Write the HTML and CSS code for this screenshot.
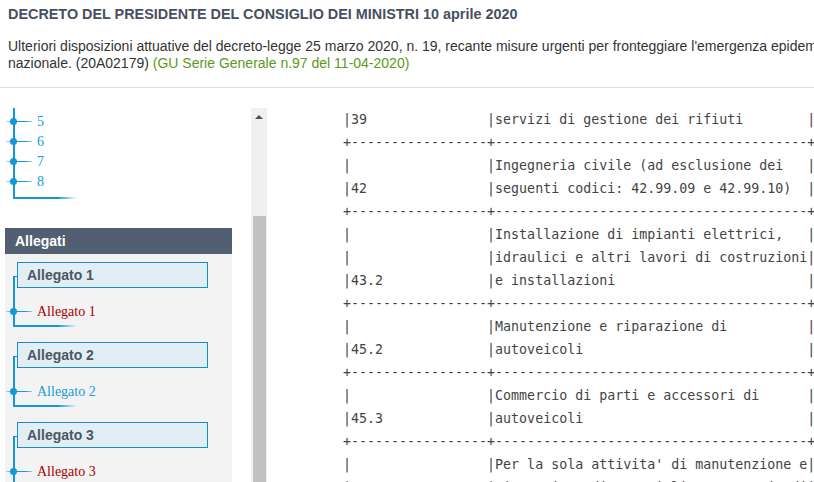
FILE: index.html
```html
<!DOCTYPE html>
<html lang="it">
<head>
  <meta charset="UTF-8" />
  <title>DPCM 10 aprile 2020</title>
  <link rel="stylesheet" href="styles.css">
</head>
<body>
  <header class="atto-header">
    <h1 class="atto-title">DECRETO DEL PRESIDENTE DEL CONSIGLIO DEI MINISTRI 10 aprile 2020</h1>
    <p class="atto-desc">Ulteriori disposizioni attuative del decreto-legge 25 marzo 2020, n. 19, recante misure urgenti per fronteggiare l'emergenza epidemiologica da COVID-19, applicabili sull'intero territorio<br>nazionale. (20A02179) <span class="gu-ref">(GU Serie Generale n.97 del 11-04-2020)</span></p>
  </header>

  <div class="layout">
    <aside class="sidebar">
      <div class="sidebar-inner">
        <ul class="tree">
          <li class="tree-item blue">5</li>
          <li class="tree-item blue">6</li>
          <li class="tree-item blue">7</li>
          <li class="tree-item blue">8</li>
        </ul>

        <div class="panel">
          <div class="panel-head">Allegati</div>

          <div class="allegato">
            <div class="allegato-title">Allegato 1</div>
            <ul class="tree sub">
              <li class="tree-item red">Allegato 1</li>
            </ul>
          </div>

          <div class="allegato">
            <div class="allegato-title">Allegato 2</div>
            <ul class="tree sub">
              <li class="tree-item blue">Allegato 2</li>
            </ul>
          </div>

          <div class="allegato">
            <div class="allegato-title">Allegato 3</div>
            <ul class="tree sub">
              <li class="tree-item red">Allegato 3</li>
            </ul>
          </div>
        </div>
      </div>

      <div class="scrollbar">
        <div class="scroll-arrow"></div>
        <div class="scroll-thumb"></div>
      </div>
    </aside>

    <main class="content">
<pre class="atto-text">|39               |servizi di gestione dei rifiuti        |
+-----------------+---------------------------------------+
|                 |Ingegneria civile (ad esclusione dei   |
|42               |seguenti codici: 42.99.09 e 42.99.10)  |
+-----------------+---------------------------------------+
|                 |Installazione di impianti elettrici,   |
|                 |idraulici e altri lavori di costruzioni|
|43.2             |e installazioni                        |
+-----------------+---------------------------------------+
|                 |Manutenzione e riparazione di          |
|45.2             |autoveicoli                            |
+-----------------+---------------------------------------+
|                 |Commercio di parti e accessori di      |
|45.3             |autoveicoli                            |
+-----------------+---------------------------------------+
|                 |Per la sola attivita' di manutenzione e|
|                 |riparazione di motocicli e commercio di|</pre>
    </main>
  </div>
</body>
</html>
```

FILE: styles.css
```css
html, body {
  margin: 0;
  padding: 0;
  height: 100%;
  overflow: hidden;
  background-color: #fff;
}

body {
  font-family: "Liberation Sans", Arial, sans-serif;
  color: #333;
  width: 1200px;
}

/* intestazione atto */
.atto-header {
  padding: 5px 8px 0;
  border-bottom: 1px solid #ddd;
  height: 82px;
}

.atto-title {
  margin: 0;
  font-size: 14.4px;
  line-height: 18px;
  font-weight: bold;
  color: #474f60;
}

.atto-desc {
  margin: 15px 0 0;
  font-size: 14px;
  line-height: 17px;
  color: #333;
}

.gu-ref {
  color: #5b9a22;
}

/* layout */
.layout {
  display: flex;
  margin-top: 20px;
  height: 400px;
}

.sidebar {
  display: flex;
  width: 267px;
  flex-shrink: 0;
}

.sidebar-inner {
  width: 251px;
  overflow: hidden;
}

/* albero */
.tree {
  list-style: none;
  margin: 0 0 0 13px;
  padding: 4px 0 6px;
  border-left: 2px solid #1596d6;
  position: relative;
}

.tree::after {
  content: "";
  position: absolute;
  left: -2px;
  bottom: -1px;
  width: 64px;
  height: 2px;
  background: linear-gradient(to right, #1596d6 70%, rgba(21, 150, 214, 0));
}

.tree-item {
  position: relative;
  height: 20px;
  line-height: 20px;
  padding-left: 22px;
  font-family: "Liberation Serif", "Times New Roman", serif;
  font-size: 14px;
}

.tree-item::before {
  content: "";
  position: absolute;
  left: -9px;
  top: 9px;
  width: 26px;
  height: 1px;
  background: linear-gradient(to right, rgba(21, 150, 214, 0.3), #1596d6 30%, #1596d6 75%, rgba(21, 150, 214, 0.4));
}

.tree-item::after {
  content: "";
  position: absolute;
  left: -5px;
  top: 6px;
  width: 7px;
  height: 7px;
  border-radius: 50%;
  background-color: #1596d6;
}

.blue {
  color: #1a9ad6;
}

.red {
  color: #a80000;
}

/* allegati */
.panel {
  margin: 30px 0 0 5px;
  width: 227px;
  background-color: #f3f3f3;
  padding-bottom: 40px;
}

.panel-head {
  background-color: #525f72;
  color: #fff;
  font-weight: bold;
  font-size: 14px;
  height: 26px;
  line-height: 27px;
  padding-left: 10px;
}

.allegato {
  margin-top: 8px;
}

.allegato + .allegato {
  margin-top: 16px;
}

.allegato-title {
  margin-left: 12px;
  width: 180px;
  height: 24px;
  line-height: 25px;
  padding-left: 9px;
  border: 1px solid #1a8ccb;
  background-color: #e1eef4;
  color: #4d5566;
  font-weight: bold;
  font-size: 14px;
}

.tree.sub {
  margin-left: 8px;
  margin-top: -12px;
  padding: 26px 0 4px;
}

.tree.sub::before {
  content: "";
  position: absolute;
  left: 0;
  top: 0;
  width: 3px;
  height: 1px;
  background-color: #1596d6;
}

/* barra di scorrimento */
.scrollbar {
  width: 16px;
  background-color: #f0f0f0;
  display: flex;
  flex-direction: column;
  align-items: center;
}

.scroll-arrow {
  margin-top: 7px;
  width: 0;
  height: 0;
  border-left: 4px solid transparent;
  border-right: 4px solid transparent;
  border-bottom: 4px solid #505050;
}

.scroll-thumb {
  margin-top: 97px;
  width: 13px;
  flex: 1;
  background-color: #c1c1c1;
}

/* testo */
.content {
  flex: 1;
  padding-left: 76px;
}

.atto-text {
  margin: 0;
  font-family: "DejaVu Sans Mono", Consolas, monospace;
  font-size: 13.3px;
  line-height: 23px;
  color: #444;
}
```
